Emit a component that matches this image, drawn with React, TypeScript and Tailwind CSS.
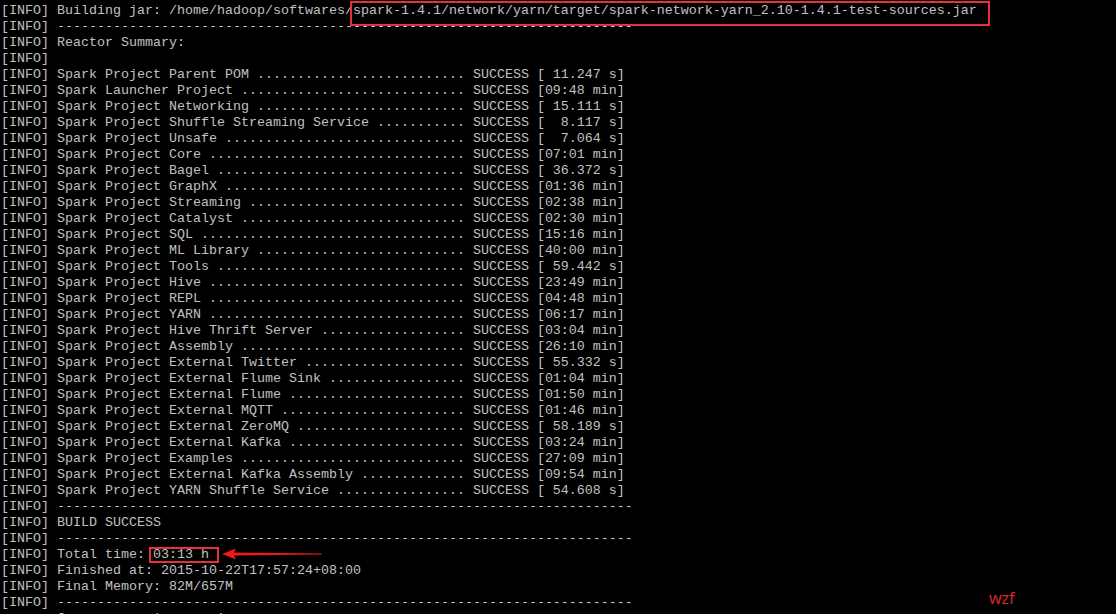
const projects: [string, string][] = [
  ["Spark Project Parent POM", " 11.247 s"],
  ["Spark Launcher Project", "09:48 min"],
  ["Spark Project Networking", " 15.111 s"],
  ["Spark Project Shuffle Streaming Service", "  8.117 s"],
  ["Spark Project Unsafe", "  7.064 s"],
  ["Spark Project Core", "07:01 min"],
  ["Spark Project Bagel", " 36.372 s"],
  ["Spark Project GraphX", "01:36 min"],
  ["Spark Project Streaming", "02:38 min"],
  ["Spark Project Catalyst", "02:30 min"],
  ["Spark Project SQL", "15:16 min"],
  ["Spark Project ML Library", "40:00 min"],
  ["Spark Project Tools", " 59.442 s"],
  ["Spark Project Hive", "23:49 min"],
  ["Spark Project REPL", "04:48 min"],
  ["Spark Project YARN", "06:17 min"],
  ["Spark Project Hive Thrift Server", "03:04 min"],
  ["Spark Project Assembly", "26:10 min"],
  ["Spark Project External Twitter", " 55.332 s"],
  ["Spark Project External Flume Sink", "01:04 min"],
  ["Spark Project External Flume", "01:50 min"],
  ["Spark Project External MQTT", "01:46 min"],
  ["Spark Project External ZeroMQ", " 58.189 s"],
  ["Spark Project External Kafka", "03:24 min"],
  ["Spark Project Examples", "27:09 min"],
  ["Spark Project External Kafka Assembly", "09:54 min"],
  ["Spark Project YARN Shuffle Service", " 54.608 s"],
];

const dashes = "-".repeat(72);

// name + dots fill cols 7..57, SUCCESS starts at col 59
const summaryLine = (name: string, time: string) => {
  const padded = name + " " + ".".repeat(Math.max(0, 50 - name.length));
  return `[INFO] ${padded} SUCCESS [${time}]`;
};

const lines: string[] = [
  "[INFO] Building jar: /home/hadoop/softwares/spark-1.4.1/network/yarn/target/spark-network-yarn_2.10-1.4.1-test-sources.jar",
  `[INFO] ${dashes}`,
  "[INFO] Reactor Summary:",
  "[INFO]",
  ...projects.map(([n, t]) => summaryLine(n, t)),
  `[INFO] ${dashes}`,
  "[INFO] BUILD SUCCESS",
  `[INFO] ${dashes}`,
  "[INFO] Total time: 03:13 h",
  "[INFO] Finished at: 2015-10-22T17:57:24+08:00",
  "[INFO] Final Memory: 82M/657M",
  `[INFO] ${dashes}`,
  "       [screen session some'",
];

export default function App() {
  return (
    <div className="relative w-[1116px] h-[614px] overflow-hidden bg-black">
      <pre className="pl-[1px] pt-[3px] m-0 font-['Liberation_Mono','Courier_New',monospace] text-[13.33px] leading-[16px] text-[#c0c0c0] whitespace-pre">
        {lines.map((l, i) => (
          <div key={i} className="h-[16px]">
            {l}
          </div>
        ))}
      </pre>

      {/* annotations */}
      <div className="absolute left-[350px] top-[1px] w-[640px] h-[25px] border-[2px] border-[#e8303a]" />
      <div className="absolute left-[149px] top-[547px] w-[70px] h-[16px] border-[2px] border-[#e8303a]" />
      <svg
        className="absolute left-[220px] top-[547px]"
        width="104"
        height="14"
        viewBox="0 0 104 14"
      >
        <polygon points="2,7 16,1.5 14,5.5 102,6.6 102,7.4 14,8.5 16,12.5" fill="#f01818" />
      </svg>
      <div className="absolute left-[989px] top-[588px] font-['Noto_Sans','Liberation_Sans',sans-serif] text-[16px] leading-[20px] text-[#d8262a]">
        wzf
      </div>
    </div>
  );
}
